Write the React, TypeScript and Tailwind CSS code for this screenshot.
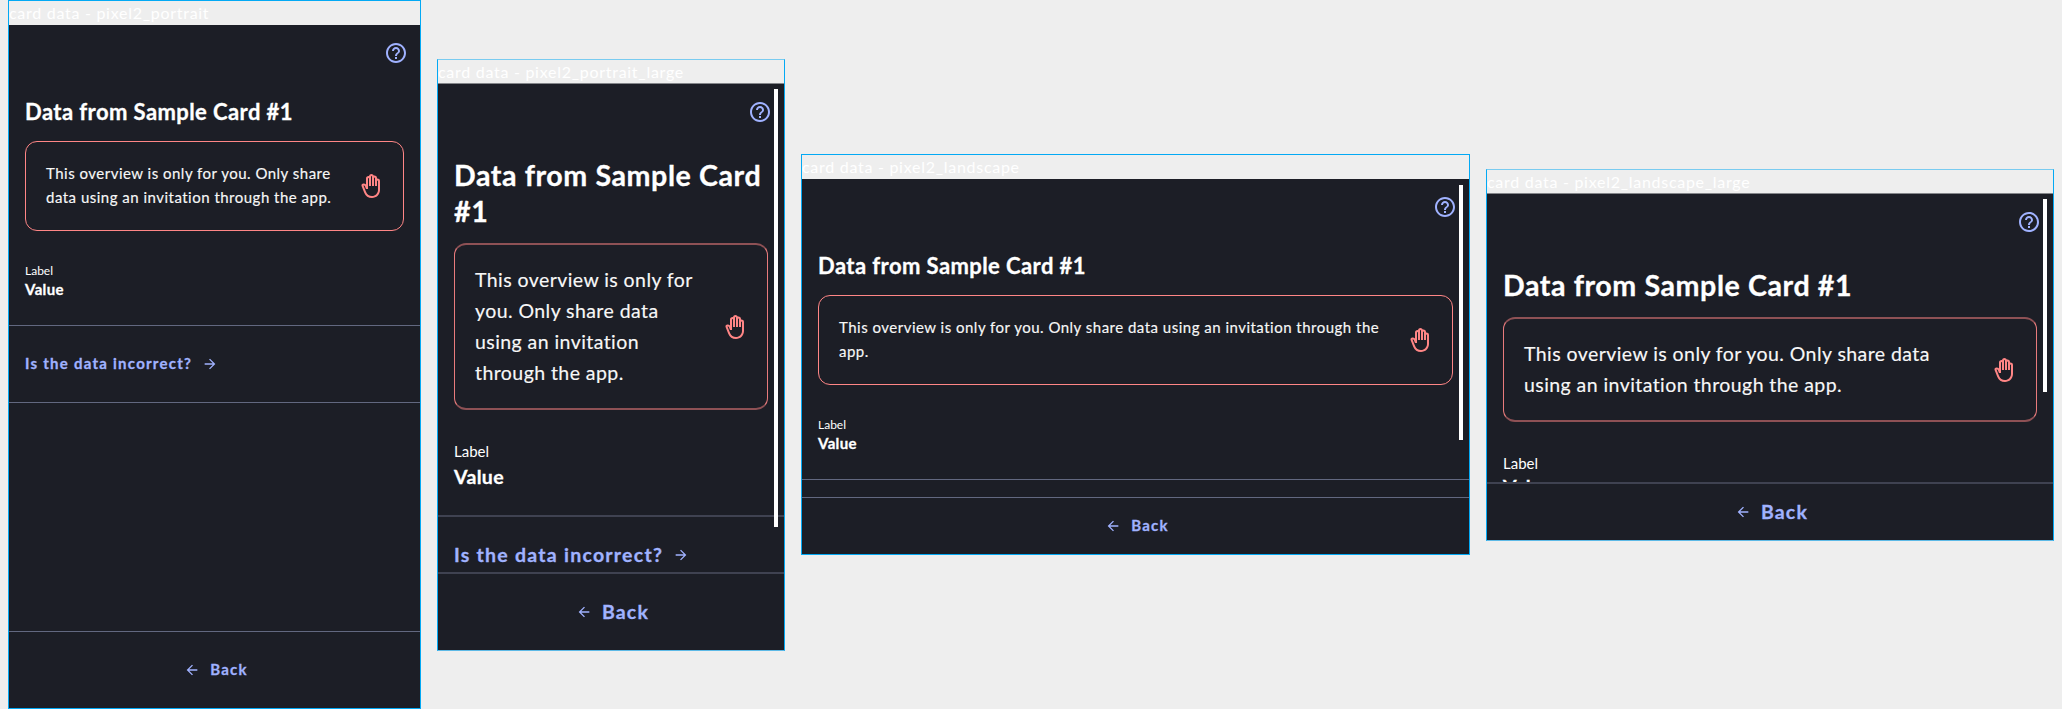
import React from 'react';
import { MdArrowBack, MdArrowForward, MdHelpOutline, MdOutlineBackHand } from 'react-icons/md';

type ScreenProps = {
  name: string;
  size: string;
  large?: boolean;
  tallFooter?: boolean;
  scrollbar?: string;
};

function Screen({ name, size, large = false, tallFooter = false, scrollbar }: ScreenProps) {
  const divider = large ? 'border-t-2 border-[#3f4251]' : 'border-t border-[#626880]';
  const action = large ? 'text-[19.5px]' : 'text-[15px]';
  const actionLabel = large ? '' : 'pb-0.5';
  const bold = 'font-bold [-webkit-text-stroke:0.3px_currentColor]';

  return (
    <section
      className={`flex shrink-0 flex-col border border-[#03a9f4] ${size} ${
        large ? 'border-t-[#79cbf0] border-b-[#5db9e6]' : ''
      }`}
    >
      <header className={`shrink-0 ${large ? 'h-[23px]' : 'h-6'}`}>
        <div className="h-[22px] pt-px text-base leading-[21px] tracking-[0.72px] whitespace-nowrap text-white">
          {name}
        </div>
      </header>

      <div
        className={`relative flex min-h-0 flex-1 flex-col bg-[#1c1e26] ${
          large ? 'border-t border-[#84868a]' : ''
        }`}
      >
        <main className="min-h-0 flex-1 overflow-hidden">
          <div className="flex h-[73px] justify-end pt-4 pr-3 text-[#a0b2ff]">
            <MdHelpOutline className="size-6" />
          </div>

          <div className="px-4">
            <h1
              className={`text-white ${bold} ${
                large
                  ? 'text-[28.6px] leading-[36px] tracking-[0.58px]'
                  : 'text-[22px] leading-7 tracking-[0.42px]'
              }`}
            >
              Data from Sample Card #1
            </h1>

            <div
              className={`flex items-center gap-6 rounded-xl px-5 ${
                large
                  ? 'mt-3.5 border-x border-y-2 border-x-[#e87b7c] border-y-[#8e5155] py-[19.5px]'
                  : 'mt-[15px] border border-[#ff8686] py-5'
              }`}
            >
              <p
                className={`flex-1 text-[#f7f7f7] [-webkit-text-stroke:0.15px_currentColor] ${
                  large
                    ? 'text-[19.5px] leading-[31px] tracking-[0.43px]'
                    : '-mt-px mb-px text-[15px] leading-6 tracking-[0.49px]'
                }`}
              >
                This overview is only for you. Only share data using an invitation through the app.
              </p>
              <MdOutlineBackHand
                className={`size-6 shrink-0 text-[#ff8686] ${large ? 'mt-px -mb-px' : ''}`}
              />
            </div>
          </div>

          <dl className={`px-4 text-white ${large ? 'pt-[29px] pb-[25px]' : 'pt-[31px] pb-[26px]'}`}>
            <dt className={large ? 'text-[15px] leading-6' : 'text-xs leading-[17px]'}>Label</dt>
            <dd
              className={`${bold} ${
                large
                  ? 'text-[19.5px] leading-[27px] tracking-[0.35px]'
                  : 'text-[15px] leading-5 tracking-[0.35px]'
              } ${large && !tallFooter ? '-mt-0.5' : ''}`}
            >
              Value
            </dd>
          </dl>

          <div className={divider}>
            <button
              className={`flex h-[76px] items-center gap-2.5 px-4 tracking-[1.25px] text-[#a0b2ff] ${bold} ${action}`}
            >
              <span className={actionLabel}>Is the data incorrect?</span>
              <MdArrowForward className="size-4" />
            </button>
          </div>
          <div className={divider} />
        </main>

        <footer className={`shrink-0 ${divider}`}>
          <button
            className={`flex w-full items-center justify-center gap-2.5 pl-[3px] tracking-[1.2px] text-[#a0b2ff] ${bold} ${action} ${
              tallFooter ? 'h-[76px]' : 'h-14'
            }`}
          >
            <MdArrowBack className="size-4" />
            <span className={actionLabel}>Back</span>
          </button>
        </footer>

        {scrollbar && <div className={`absolute right-1.5 w-1 bg-white ${scrollbar}`} />}
      </div>
    </section>
  );
}

export default function App() {
  return (
    <div className="flex h-[709px] w-[2062px] items-center gap-4 overflow-hidden bg-[#eeeeee] px-2 font-['Lato',sans-serif]">
      <Screen name="card data - pixel2_portrait" size="h-[709px] w-[413px]" tallFooter />
      <Screen
        name="card data - pixel2_portrait_large"
        size="h-[592px] w-[348px]"
        large
        tallFooter
        scrollbar="top-[5px] h-[438px]"
      />
      <Screen
        name="card data - pixel2_landscape"
        size="h-[401px] w-[669px]"
        scrollbar="top-1.5 h-[255px]"
      />
      <Screen
        name="card data - pixel2_landscape_large"
        size="h-[372px] w-[568px]"
        large
        scrollbar="top-[5px] h-[193px]"
      />
    </div>
  );
}
